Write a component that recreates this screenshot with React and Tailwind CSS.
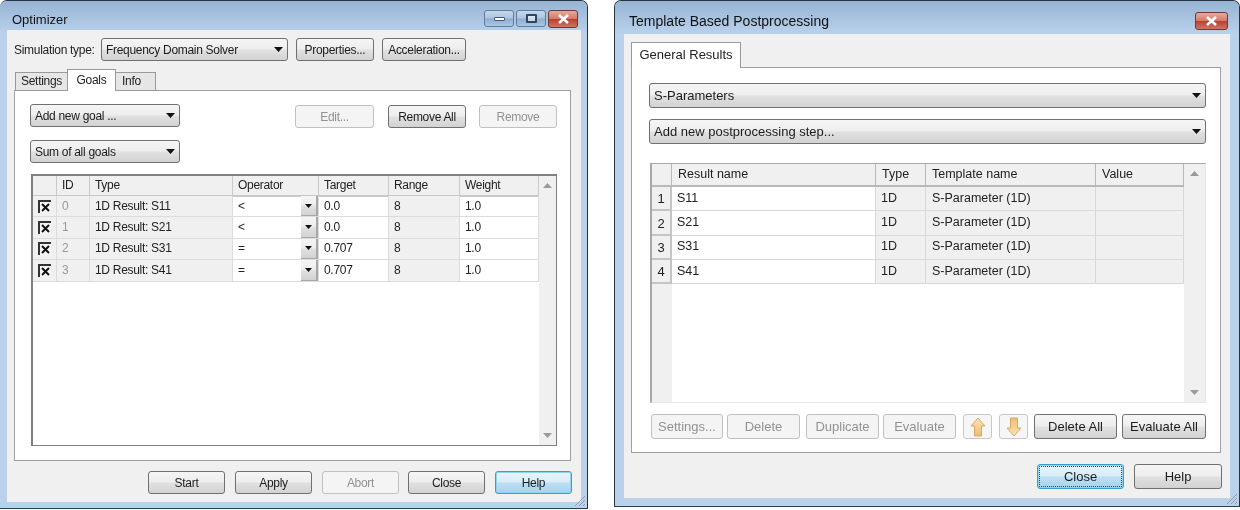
const btnBg = 'bg-[linear-gradient(#f5f5f5,#eeeeee_46%,#e0e0e0_54%,#d2d2d2)]'
const font = 'font-["Liberation_Sans",Arial,sans-serif]'

function Btn({ label, w, h = 'h-[23px]', text = 'text-[12px]', disabled, focus, dotted, className = '' }) {
  let look = `${btnBg} border-[#707070] text-[#1c1c1c]`
  if (disabled) look = 'bg-[#f4f4f4] border-[#c0c0c0] text-[#929292]'
  if (focus) look = 'bg-[linear-gradient(#e8f4fb,#d8ecf8_48%,#bcdff3_52%,#a8d3ec)] border-[#3c9fc8] text-[#1c1c1c] shadow-[inset_0_0_0_1px_#8fd4ef]'
  const dots = dotted ? 'outline-1 outline-dotted outline-[#444] outline-offset-[-3px]' : ''
  return (
    <div className={`${w} ${h} ${text} ${look} ${dots} ${className} shrink-0 flex items-center justify-center border rounded-[3px]`}>
      {label}
    </div>
  )
}

function Arrow() {
  return (
    <svg width="9" height="5" viewBox="0 0 9 5">
      <path d="M0 0h9L4.5 5z" fill="#111" />
    </svg>
  )
}

function Select({ label, w, h = 'h-[23px]', text = 'text-[12px]', className = '' }) {
  return (
    <div className={`${w} ${h} ${text} ${btnBg} ${className} shrink-0 flex items-center justify-between px-[4px] border border-[#707070] rounded-[3px] text-[#1c1c1c]`}>
      <span>{label}</span>
      <Arrow />
    </div>
  )
}

function Scrollbar({ w }) {
  return (
    <div className={`${w} shrink-0 bg-[#f0f0f0] flex flex-col items-center justify-between py-[7px]`}>
      <svg width="9" height="5" viewBox="0 0 9 5"><path d="M0 5h9L4.5 0z" fill="#9a9a9a" /></svg>
      <svg width="9" height="5" viewBox="0 0 9 5"><path d="M0 0h9L4.5 5z" fill="#9a9a9a" /></svg>
    </div>
  )
}

function Grip() {
  return (
    <svg width="13" height="13" viewBox="0 0 13 13" className="absolute right-[1px] bottom-[1px]">
      <path d="M12 2L2 12M12 6L6 12M12 10L10 12" stroke="#8c9aa8" strokeWidth="1" fill="none" />
    </svg>
  )
}

function CloseBtn({ w, className = '' }) {
  return (
    <div className={`${w} ${className} h-[18px] flex items-center justify-center rounded-[3px] border border-[#6b3a36] bg-[linear-gradient(#e9a99c,#d67a6a_48%,#bb3f2e_52%,#cf7466)]`}>
      <svg width="13" height="10" viewBox="0 0 13 10">
        <path d="M2 1l9 8M11 1l-9 8" stroke="#fff" strokeWidth="2.6" />
      </svg>
    </div>
  )
}

function WinBtn({ children }) {
  return (
    <div className="w-[30px] h-[17px] flex items-center justify-center rounded-[3px] border border-[#5f7c9c] bg-[linear-gradient(#c5d8ec,#adc5df_48%,#8fadcf_52%,#a9c6e2)]">
      {children}
    </div>
  )
}

function Window({ size, children }) {
  return (
    <div className={`${size} relative flex flex-col shrink-0 border border-[#26323c] border-b-[#1d4658] rounded-t-[7px] bg-[#b9d1ea] overflow-hidden`}>
      <div className="absolute inset-x-0 top-0 h-[34px] bg-[linear-gradient(#97b4d4,#bad2ec)]" />
      {children}
    </div>
  )
}

const goalRows = [
  ['0', 'S11', '<', '0.0'],
  ['1', 'S21', '<', '0.0'],
  ['2', 'S31', '=', '0.707'],
  ['3', 'S41', '=', '0.707'],
]

const goalHead = ['', 'ID', 'Type', 'Operator', 'Target', 'Range', 'Weight']
const goalCols = 'grid grid-cols-[24px_33px_143px_86px_70px_71px_79px]'

function GoalsTable() {
  return (
    <div className="mt-[11px] ml-[16px] w-[526px] h-[272px] flex border border-[#808080] border-t-2 border-l-2 bg-white">
      <div className="w-[506px] shrink-0">
        <div className={`${goalCols} h-[20px]`}>
          {goalHead.map((h, i) => (
            <div key={i} className="bg-[#f0f0f0] border-r border-b-2 border-[#c8c8c8] pl-[5px] pb-[1px] flex items-center text-[#222]">{h}</div>
          ))}
        </div>
        {goalRows.map(([id, s, op, target]) => (
          <div key={id} className={`${goalCols} h-[21.4px] text-[#222]`}>
            <div className="bg-[#f0f0f0] border-r border-b border-[#dcdcdc] flex items-center justify-center">
              <div className="w-[13px] h-[13px] bg-[#f4f4f4] border-t-2 border-l-2 border-[#333] flex items-center justify-center">
                <svg width="9" height="9" viewBox="0 0 9 9"><path d="M1 1l7 7M8 1L1 8" stroke="#111" strokeWidth="2" /></svg>
              </div>
            </div>
            <div className="bg-[#f0f0f0] border-r border-b border-[#dcdcdc] pl-[5px] pb-[1px] flex items-center text-[#999]">{id}</div>
            <div className="bg-[#f0f0f0] border-r border-b border-[#dcdcdc] pl-[5px] pb-[1px] flex items-center">1D Result: {s}</div>
            <div className="border-r border-b border-[#dcdcdc] pl-[5px] flex items-center justify-between">
              <span className="pb-[1px]">{op}</span>
              <div className={`${btnBg} w-[17px] h-full border-r-2 border-b border-[#a8a8a8] flex items-center justify-center`}>
                <svg width="7" height="4" viewBox="0 0 7 4"><path d="M0 0h7L3.5 4z" fill="#111" /></svg>
              </div>
            </div>
            <div className="border-r border-b border-[#dcdcdc] pl-[5px] pb-[1px] flex items-center">{target}</div>
            <div className="bg-[#f0f0f0] border-r border-b border-[#dcdcdc] pl-[5px] pb-[1px] flex items-center">8</div>
            <div className="border-r border-b border-[#dcdcdc] pl-[5px] pb-[1px] flex items-center">1.0</div>
          </div>
        ))}
      </div>
      <Scrollbar w="w-[17px]" />
    </div>
  )
}

function Optimizer() {
  return (
    <Window size="w-[588px] h-[509px] border-l-0">
      <div className="relative h-[29px] flex items-start justify-between pl-[12px] pr-[9px]">
        <span className="mt-[11px] text-[13px] leading-[16px] text-[#111]">Optimizer</span>
        <div className="mt-[9px] flex gap-[2px]">
          <WinBtn><div className="w-[11px] h-[4px] bg-white border border-[#44597a] rounded-[1px]" /></WinBtn>
          <WinBtn><div className="w-[11px] h-[9px] border-2 border-[#2f4660] bg-white/50 rounded-[1px]" /></WinBtn>
          <CloseBtn w="w-[30px]" />
        </div>
      </div>
      <div className="relative ml-[7px] mr-[6px] h-[472px] bg-[#f0f0f0] px-[7px] text-[12px] tracking-[-0.3px] text-[#222]">
        <div className="pt-[8px] flex items-center h-[31px]">
          <span className="w-[87px]">Simulation type:</span>
          <Select label="Frequency Domain Solver" w="w-[187px]" />
          <Btn label="Properties..." w="w-[78px]" className="ml-[8px]" />
          <Btn label="Acceleration..." w="w-[84px]" className="ml-[8px]" />
        </div>
        <div className="relative z-10 mt-[8px] h-[21px] flex items-end pl-[1px]">
          <div className="w-[53px] h-[19px] mb-[-1px] border border-[#9a9a9a] bg-[#e6e6e6] pb-[1px] flex items-center justify-center">Settings</div>
          <div className="w-[49px] h-[22px] mb-[-1px] -mx-px border border-b-0 border-[#9a9a9a] bg-white flex items-center justify-center z-10 pb-[2px]">Goals</div>
          <div className="w-[41px] h-[19px] mb-[-1px] border border-[#9a9a9a] bg-[#e6e6e6] pl-[6px] pb-[1px] flex items-center">Info</div>
        </div>
        <div className="w-[557px] h-[371px] border border-[#a0a0a0] bg-white">
          <div className="pt-[13px] pl-[15px] flex">
            <Select label="Add new goal ..." w="w-[150px]" />
            <Btn label="Edit..." w="w-[79px]" disabled className="ml-[115px] mt-[1px]" />
            <Btn label="Remove All" w="w-[78px]" className="ml-[14px] mt-[1px]" />
            <Btn label="Remove" w="w-[78px]" disabled className="ml-[13px] mt-[1px]" />
          </div>
          <Select label="Sum of all goals" w="w-[150px]" className="mt-[12px] ml-[15px]" />
          <GoalsTable />
        </div>
        <div className="mt-[10px] flex pl-[134px]">
          <Btn label="Start" w="w-[77px]" />
          <Btn label="Apply" w="w-[77px]" className="ml-[10px]" />
          <Btn label="Abort" w="w-[77px]" disabled className="ml-[10px]" />
          <Btn label="Close" w="w-[77px]" className="ml-[9px]" />
          <Btn label="Help" w="w-[77px]" focus className="ml-[10px]" />
        </div>
      </div>
      <Grip />
    </Window>
  )
}

const resultRows = ['S11', 'S21', 'S31', 'S41']
const resultCols = 'grid grid-cols-[20px_204px_50px_170px_88px]'

function ResultsTable() {
  return (
    <div className="mt-[19px] ml-[18px] w-[556px] h-[240px] flex border border-[#a8a8a8] border-l-2 border-b-[#e8e8e8] border-r-[#e8e8e8] bg-white text-[12.5px]">
      <div className="w-[532px] shrink-0 flex flex-col">
        <div className={`${resultCols} h-[23px]`}>
          {['', 'Result name', 'Type', 'Template name', 'Value'].map((h, i) => (
            <div key={i} className="bg-[#f0f0f0] border-r border-b-2 border-[#b8b8b8] pl-[6px] flex items-center text-[#222]">{h}</div>
          ))}
        </div>
        {resultRows.map((s, i) => (
          <div key={s} className={`${resultCols} h-[24.3px] text-[#222]`}>
            <div className="bg-[#f0f0f0] border-r-2 border-b-2 border-[#c4c4c4] flex items-center justify-center pt-[2px] text-[13px]">{i + 1}</div>
            <div className="border-r border-b border-[#d8d8d8] pl-[5px] pb-[1px] flex items-center">{s}</div>
            <div className="bg-[#f0f0f0] border-r border-b border-[#d8d8d8] pl-[5px] pb-[1px] flex items-center">1D</div>
            <div className="bg-[#f0f0f0] border-r border-b border-[#d8d8d8] pl-[6px] pb-[1px] flex items-center">S-Parameter (1D)</div>
            <div className="bg-[#f0f0f0] border-r border-b border-[#d8d8d8]" />
          </div>
        ))}
        <div className="w-[20px] flex-1 bg-[#f0f0f0]" />
      </div>
      <Scrollbar w="w-[21px]" />
    </div>
  )
}

function ArrowBtn({ down }) {
  return (
    <div className="w-[29px] h-[25px] shrink-0 flex items-center justify-center border border-[#c8c8c8] rounded-[3px] bg-[#f6f6f6]">
      <svg width="16" height="20" viewBox="0 0 16 20" className={down ? 'rotate-180' : ''}>
        <defs>
          <linearGradient id={down ? 'ad' : 'au'} x1="0" y1="0" x2="0" y2="1">
            <stop offset="0" stopColor="#fbe3b8" />
            <stop offset="1" stopColor="#f0bd72" />
          </linearGradient>
        </defs>
        <path d="M8 1L15 9H11.5V19H4.5V9H1z" fill={`url(#${down ? 'ad' : 'au'})`} stroke="#d9a869" strokeWidth="1" />
      </svg>
    </div>
  )
}

function Postprocessing() {
  const big = { h: 'h-[25px]', text: 'text-[13px]' }
  return (
    <Window size="w-[626px] h-[507px]">
      <div className="relative h-[33px] flex items-start justify-between pl-[14px] pr-[11px]">
        <span className="mt-[12px] text-[14px] leading-[17px] text-[#111]">Template Based Postprocessing</span>
        <CloseBtn w="w-[33px]" className="mt-[11px]" />
      </div>
      <div className="relative mx-[9px] h-[464px] bg-[#f0f0f0] pl-[7px] text-[#222]">
        <div className="relative z-10 pt-[8px] h-[33px] flex items-end">
          <div className="w-[110px] h-[26px] mb-[-1px] border border-b-0 border-[#9a9a9a] bg-white flex items-center justify-center text-[13px] pb-[2px]">General Results</div>
        </div>
        <div className="w-[590px] h-[386px] border border-[#a0a0a0] bg-white">
          <Select label="S-Parameters" w="w-[557px]" {...big} className="mt-[15px] ml-[17px]" />
          <Select label="Add new postprocessing step..." w="w-[557px]" {...big} className="mt-[11px] ml-[17px]" />
          <ResultsTable />
          <div className="mt-[11px] ml-[19px] flex">
            <Btn label="Settings..." w="w-[72px]" {...big} disabled />
            <Btn label="Delete" w="w-[73px]" {...big} disabled className="ml-[4px]" />
            <Btn label="Duplicate" w="w-[73px]" {...big} disabled className="ml-[6px]" />
            <Btn label="Evaluate" w="w-[73px]" {...big} disabled className="ml-[4px]" />
            <div className="ml-[7px]"><ArrowBtn /></div>
            <div className="ml-[7px]"><ArrowBtn down /></div>
            <Btn label="Delete All" w="w-[83px]" {...big} className="ml-[6px]" />
            <Btn label="Evaluate All" w="w-[84px]" {...big} className="ml-[5px]" />
          </div>
        </div>
        <div className="mt-[11px] flex pl-[406px]">
          <Btn label="Close" w="w-[87px]" {...big} focus dotted />
          <Btn label="Help" w="w-[88px]" {...big} className="ml-[10px]" />
        </div>
      </div>
      <Grip />
    </Window>
  )
}

export default function App() {
  return (
    <div className={`${font} w-[1240px] h-[510px] bg-white flex items-start gap-[26px] overflow-hidden blur-[0.35px]`}>
      <Optimizer />
      <Postprocessing />
    </div>
  )
}
